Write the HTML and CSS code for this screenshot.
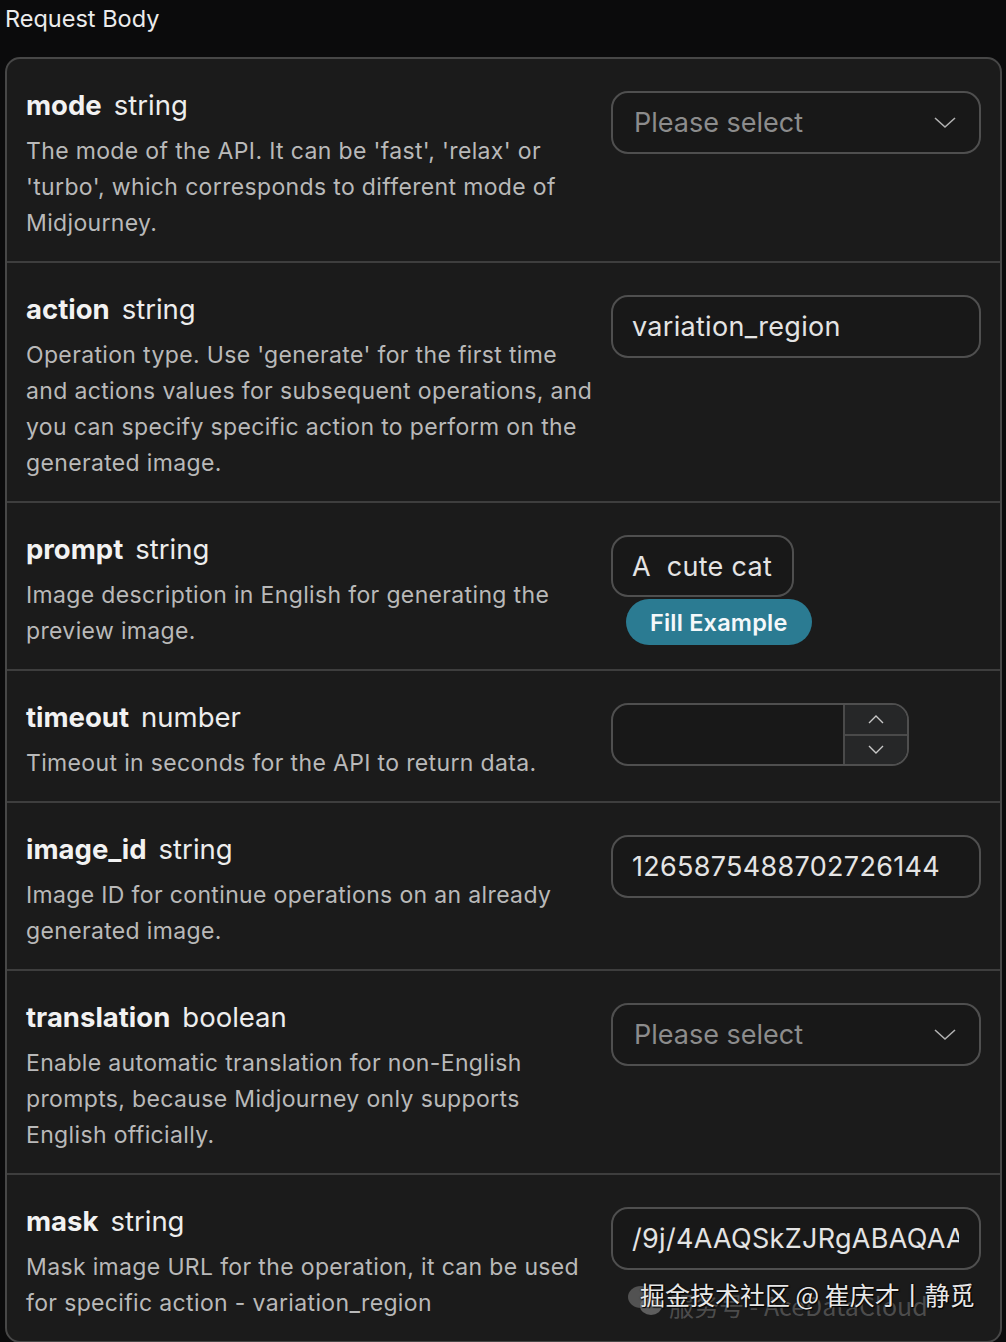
FILE: index.html
```html
<!DOCTYPE html>
<html>
<head>
<meta charset="utf-8">
<link rel="stylesheet" href="styles.css">
</head>
<body>
<div class="page-title">Request Body</div>
<div class="card">
  <div class="row">
    <div class="info">
      <div class="name"><b>mode</b><span class="type">string</span></div>
      <p class="desc">The mode of the API. It can be 'fast', 'relax' or 'turbo', which corresponds to different mode of Midjourney.</p>
    </div>
    <div class="control">
      <div class="field select"><span class="placeholder">Please select</span>
        <svg class="chev" width="22" height="12" viewBox="0 0 22 12"><path d="M1 1 L11 10 L21 1" fill="none" stroke="#b0b0b0" stroke-width="1.6"/></svg>
      </div>
    </div>
  </div>
  <div class="row">
    <div class="info">
      <div class="name"><b>action</b><span class="type">string</span></div>
      <p class="desc">Operation type. Use 'generate' for the first time and actions values for subsequent operations, and you can specify specific action to perform on the generated image.</p>
    </div>
    <div class="control">
      <div class="field"><span class="value">variation_region</span></div>
    </div>
  </div>
  <div class="row">
    <div class="info">
      <div class="name"><b>prompt</b><span class="type">string</span></div>
      <p class="desc">Image description in English for generating the preview image.</p>
    </div>
    <div class="control">
      <div class="field auto"><span class="value">A&nbsp;&nbsp;cute cat</span></div>
      <button class="fill">Fill Example</button>
    </div>
  </div>
  <div class="row">
    <div class="info">
      <div class="name"><b>timeout</b><span class="type">number</span></div>
      <p class="desc">Timeout in seconds for the API to return data.</p>
    </div>
    <div class="control">
      <div class="number">
        <div class="num-input"></div>
        <div class="spin">
          <div class="spin-btn"><svg width="16" height="9" viewBox="0 0 16 9"><path d="M1 8 L8 1 L15 8" fill="none" stroke="#c8c8c8" stroke-width="1.4"/></svg></div>
          <div class="spin-btn"><svg width="16" height="9" viewBox="0 0 16 9"><path d="M1 1 L8 8 L15 1" fill="none" stroke="#c8c8c8" stroke-width="1.4"/></svg></div>
        </div>
      </div>
    </div>
  </div>
  <div class="row">
    <div class="info">
      <div class="name"><b>image_id</b><span class="type">string</span></div>
      <p class="desc">Image ID for continue operations on an already generated image.</p>
    </div>
    <div class="control">
      <div class="field"><span class="value">1265875488702726144</span></div>
    </div>
  </div>
  <div class="row">
    <div class="info">
      <div class="name"><b>translation</b><span class="type">boolean</span></div>
      <p class="desc">Enable automatic translation for non-English prompts, because Midjourney only supports English officially.</p>
    </div>
    <div class="control">
      <div class="field select"><span class="placeholder">Please select</span>
        <svg class="chev" width="22" height="12" viewBox="0 0 22 12"><path d="M1 1 L11 10 L21 1" fill="none" stroke="#b0b0b0" stroke-width="1.6"/></svg>
      </div>
    </div>
  </div>
  <div class="row last">
    <div class="info">
      <div class="name"><b>mask</b><span class="type">string</span></div>
      <p class="desc">Mask image URL for the operation, it can be used for specific action - variation_region</p>
    </div>
    <div class="control">
      <div class="field"><span class="value clip">/9j/4AAQSkZJRgABAQAAAQABAAD</span></div>
    </div>
    <div class="watermark">
      <svg class="wm-icon" width="36" height="34" viewBox="0 0 36 34"><ellipse cx="14" cy="13" rx="13" ry="11" fill="#6a6a6a" opacity="0.7"/><ellipse cx="24" cy="22" rx="11" ry="9" fill="#7a7a7a" opacity="0.7"/></svg>
      <span class="wm-sub">服务号 - AceDataCloud</span>
      <span class="wm-main">掘金技术社区 @ 崔庆才丨静觅</span>
    </div>
  </div>
</div>
</body>
</html>
```
FILE: styles.css
```css
html, body {
  margin: 0;
  padding: 0;
  background: #0b0b0c;
}
body {
  font-family: Inter, "Noto Sans", "Noto Sans CJK SC", sans-serif;
  color: #e6e6e6;
  width: 1006px;
  height: 1342px;
  overflow: hidden;
}
.page-title {
  font-size: 23.5px;
  line-height: 38px;
  padding-left: 5px;
  color: #ececec;
  margin-bottom: 19px;
}
.card {
  margin-left: 5px;
  width: 993px;
  border: 2px solid #474747;
  border-radius: 15px;
  background: #1b1b1b;
}
.row {
  display: flex;
  gap: 10px;
  padding: 28px 19px 20px 19px;
  border-bottom: 2px solid #3e3e3e;
  position: relative;
}
.row.last {
  border-bottom: none;
}
.info {
  width: 575px;
  flex: none;
}
.name {
  font-size: 27.5px;
  line-height: 36px;
  color: #f2f2f2;
}
.name b {
  font-weight: 700;
}
.type {
  margin-left: 12px;
  font-weight: 400;
  color: #ededed;
}
.desc {
  margin: 10px 0 0 0;
  font-size: 23px;
  line-height: 36px;
  letter-spacing: 0.35px;
  color: #b9b9b9;
}
.control {
  width: 370px;
  flex: none;
  padding-top: 4px;
  display: flex;
  flex-direction: column;
  align-items: flex-start;
}
.field {
  box-sizing: border-box;
  width: 370px;
  height: 63px;
  border: 2px solid #4f4f4f;
  border-radius: 17px;
  background: #181818;
  display: flex;
  align-items: center;
  padding: 0 20px 0 19px;
  font-size: 27px;
  letter-spacing: 0.3px;
  overflow: hidden;
}
.field.auto {
  width: auto;
  height: 62px;
}
.select {
  justify-content: space-between;
  padding-left: 21px;
  letter-spacing: 0;
}
.placeholder {
  color: #8c8c8c;
}
.value {
  color: #e4e4e4;
  white-space: nowrap;
}
.value.clip {
  overflow: hidden;
  display: block;
  width: 328px;
}
.chev {
  margin-right: 3px;
}
.fill {
  margin: 2px 0 0 15px;
  height: 46px;
  padding: 0 24px;
  border: none;
  border-radius: 23px;
  background: #2b7b92;
  color: #f4f8fa;
  font-family: Inter, "Noto Sans", sans-serif;
  font-size: 23.5px;
  font-weight: 600;
  letter-spacing: 0.2px;
}
.number {
  box-sizing: border-box;
  width: 298px;
  height: 63px;
  border: 2px solid #4f4f4f;
  border-radius: 17px;
  background: #181818;
  display: flex;
  overflow: hidden;
}
.num-input {
  flex: 1;
}
.spin {
  width: 62px;
  border-left: 2px solid #4a4a4a;
  background: #262728;
  display: flex;
  flex-direction: column;
}
.spin-btn {
  flex: 1;
  display: flex;
  align-items: center;
  justify-content: center;
}
.spin-btn + .spin-btn {
  border-top: 2px solid #4a4a4a;
}
.watermark {
  position: absolute;
  left: 618px;
  top: 100px;
  width: 380px;
  height: 40px;
}
.wm-icon {
  position: absolute;
  left: 2px;
  top: 9px;
}
.wm-sub {
  position: absolute;
  left: 44px;
  top: 12px;
  font-size: 25px;
  color: rgba(120,120,120,0.55);
  white-space: nowrap;
  font-family: "Noto Sans CJK SC", sans-serif;
}
.wm-main {
  position: absolute;
  left: 15px;
  top: 1px;
  font-size: 25px;
  color: #e8e8e8;
  white-space: nowrap;
  font-family: "Noto Sans CJK SC", sans-serif;
  text-shadow: 0 0 2px #000, 1px 1px 1px #000;
}
```
